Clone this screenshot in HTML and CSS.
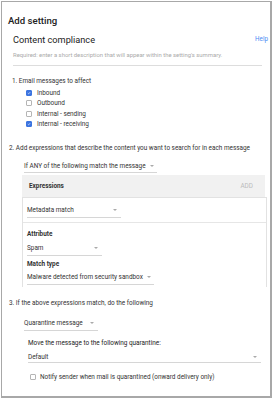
FILE: index.html
```html
<!DOCTYPE html>
<html>
<head>
<meta charset="utf-8">
<link rel="stylesheet" href="styles.css">
</head>
<body>
<div class="frame">
  <div class="title">Add setting</div>
  <div class="head">
    <div class="subtitle">Content compliance</div>
    <a class="help">Help</a>
  </div>
  <div class="required">Required: enter a short description that will appear within the setting's summary.</div>
  <div class="rule"></div>

  <div class="step step1">1. Email messages to affect</div>
  <div class="checks">
    <div class="check"><span class="box on"><svg viewBox="0 0 10 10"><path d="M2 5.2 L4.1 7.2 L8 2.8" fill="none" stroke="#fff" stroke-width="1.5"/></svg></span>Inbound</div>
    <div class="check"><span class="box"></span>Outbound</div>
    <div class="check"><span class="box"></span>Internal - sending</div>
    <div class="check"><span class="box on"><svg viewBox="0 0 10 10"><path d="M2 5.2 L4.1 7.2 L8 2.8" fill="none" stroke="#fff" stroke-width="1.5"/></svg></span>Internal - receiving</div>
  </div>

  <div class="step step2">2. Add expressions that describe the content you want to search for in each message</div>
  <div class="select sel-any"><span>If ANY of the following match the message</span><i class="arrow"></i></div>

  <div class="expr">
    <div class="expr-head"><span class="bold">Expressions</span><span class="add">ADD</span></div>
    <div class="card">
      <div class="card-top">
        <div class="select sel-meta"><span>Metadata match</span><i class="arrow"></i></div>
      </div>
      <div class="card-body">
        <div class="label">Attribute</div>
        <div class="select sel-spam"><span>Spam</span><i class="arrow"></i></div>
        <div class="label label2">Match type</div>
        <div class="select sel-mal"><span>Malware detected from security sandbox</span><i class="arrow"></i></div>
      </div>
    </div>
  </div>

  <div class="step step3">3. If the above expressions match, do the following</div>
  <div class="select sel-q"><span>Quarantine message</span><i class="arrow"></i></div>
  <div class="move">Move the message to the following quarantine:</div>
  <div class="select sel-def"><span>Default</span><i class="arrow"></i></div>
  <div class="check notify"><span class="box"></span>Notify sender when mail is quarantined (onward delivery only)</div>
</div>
</body>
</html>
```

FILE: styles.css
```css
* { box-sizing: border-box; }
html, body { margin: 0; padding: 0; background: #fff; }
body {
  font-family: Roboto, "Noto Sans", Arial, sans-serif;
  color: #333;
  font-size: 6.4px;
  white-space: nowrap;
}
.frame {
  width: 271px;
  height: 397px;
  margin: 1px 0 0 1px;
  border: 1px solid #a8a8a8;
  border-width: 1px 2px 2px 1px;
  position: relative;
}
.title {
  margin-top: 12px;
  padding-left: 6px;
  height: 14px;
  line-height: 14px;
  font-size: 9.6px;
  font-weight: 500;
  color: #222;
}
.head {
  display: flex;
  justify-content: space-between;
  align-items: center;
  height: 14px;
  margin-top: 4px;
  padding-left: 11px;
  padding-right: 2px;
}
.subtitle { font-size: 9.2px; color: #222; }
.help { font-size: 6.3px; color: #4a8af4; }
.required {
  height: 9px;
  line-height: 9px;
  margin-top: 5px;
  padding-left: 11px;
  font-size: 5.9px;
  color: #aaa;
}
.rule {
  margin: 5px 8px 0 11px;
  border-top: 1px solid #ddd;
  height: 0;
}
.step { height: 10px; line-height: 10px; color: #333; }
.step1 { margin-top: 10px; padding-left: 10px; }
.checks { margin-top: 2px; padding-left: 24px; }
.check {
  display: flex;
  align-items: center;
  height: 10.3px;
  gap: 5px;
}
.box {
  width: 6px;
  height: 6px;
  border: 1px solid #b5b5b5;
  border-radius: 1px;
  display: inline-flex;
  flex: none;
}
.box.on { background: #3b74e0; border-color: #3b74e0; }
.box svg { width: 100%; height: 100%; display: block; }

.step2 { margin-top: 14px; padding-left: 7px; }
.select {
  display: flex;
  align-items: center;
  border-bottom: 1px solid #d6d6d6;
  height: 12px;
  position: relative;
}
.select span { flex: none; }
.arrow {
  width: 0; height: 0;
  border-left: 2px solid transparent;
  border-right: 2px solid transparent;
  border-top: 2px solid #aaa;
  margin-left: auto;
  margin-right: 4px;
  flex: none;
}
.sel-any { margin: 7px 0 0 22px; width: 133px; height: 13px; }
.sel-any .arrow { margin-left: 4px; }

.expr { margin: 2px 3px 0 20px; }
.expr-head {
  background: #f1f1f1;
  height: 22px;
  display: flex;
  align-items: center;
  justify-content: space-between;
  padding: 0 12px 0 7px;
  margin-right: 2px;
}
.bold { font-weight: 700; color: #333; }
.add { color: #bbb; }
.card {
  background: #fff;
  border: 1px solid #e2e2e2;
  border-bottom: none;
  height: 90px;
  padding: 0;
}
.card-top {
  height: 25px;
  border-bottom: 1px solid #e6e6e6;
  padding: 4px 0 0 4px;
}
.sel-meta { width: 94px; height: 16px; }
.card-body { padding: 6px 0 0 4px; }
.label { font-weight: 700; height: 10px; line-height: 10px; color: #333; }
.sel-spam { width: 75px; height: 15px; margin-top: 2px; }
.label2 { margin-top: 3px; }
.sel-mal { width: 127px; height: 16px; margin-top: 0; }
.sel-mal .arrow { margin-left: 4px; }

.step3 { margin-top: 11px; padding-left: 7px; }
.sel-q { margin: 8px 0 0 22px; width: 74px; height: 15px; }
.move { margin: 7px 0 0 26px; height: 10px; line-height: 10px; color: #222; }
.sel-def { margin: 3px 9px 0 26px; height: 12px; }
.notify { margin: 9px 0 0 28px; height: 10px; gap: 4px; }
```
